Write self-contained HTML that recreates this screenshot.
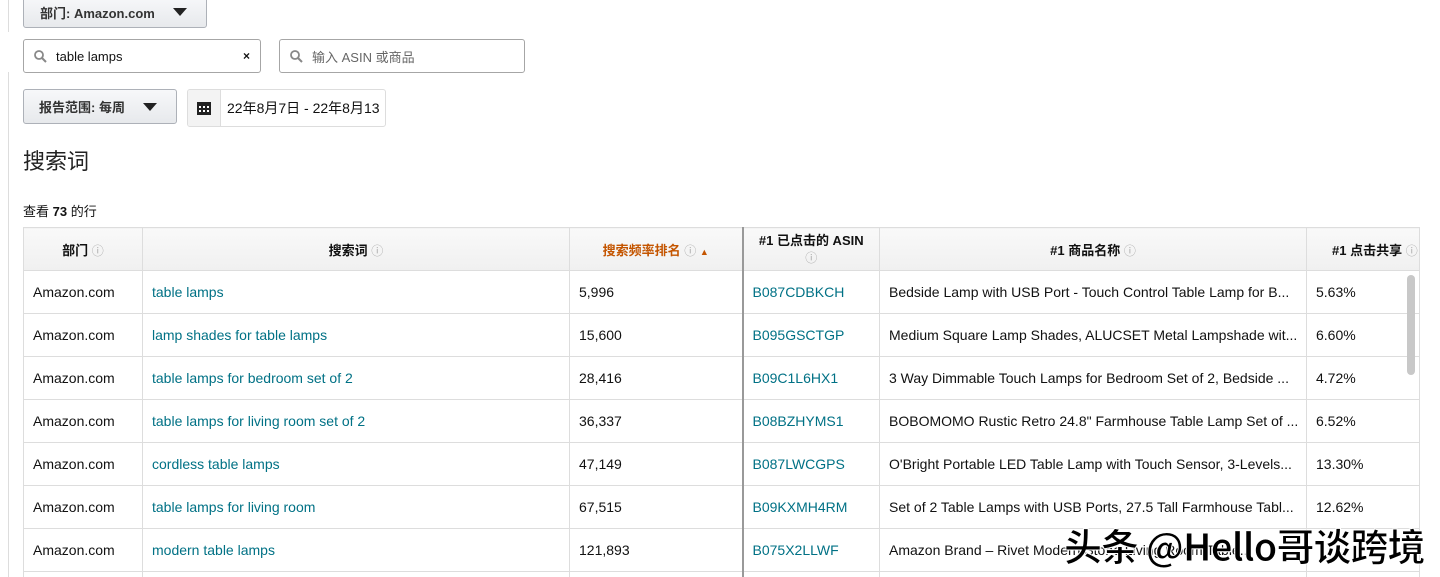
<!DOCTYPE html>
<html style="width:1440px;height:577px;overflow:hidden"><head><meta charset="utf-8"><style>
*{box-sizing:border-box;margin:0;padding:0}
body{width:1440px;height:577px;overflow:hidden;background:#fff;font-family:"Liberation Sans","Noto Sans CJK SC",sans-serif;color:#111;font-size:14px;position:relative}
.a{position:absolute}
.btn{background:linear-gradient(#f7f8fa,#e7e9ec);border:1px solid #adb1b8;border-radius:3px;font-size:13px;font-weight:bold;color:#333;display:flex;align-items:center}
.inp{border:1px solid #a6a6a6;border-radius:3px;background:#fff;display:flex;align-items:center;font-size:13px}
.tri{width:0;height:0;border-left:7px solid transparent;border-right:7px solid transparent;border-top:8px solid #222;margin-left:18px}
table{border-collapse:collapse;position:absolute;left:23px;top:227px;table-layout:fixed;width:1410px}
td,th{border:1px solid #ddd;font-size:14px;height:43px;padding:0 9px;white-space:nowrap;overflow:hidden}
th{background:linear-gradient(#f9f9f9,#f0f0f0);font-size:13px;font-weight:bold;text-align:center;color:#111}
td.l{color:#007185}
.i{color:#aaa;font-weight:normal;font-size:12px}
</style></head><body>
<div class="a" style="left:8px;top:0;width:1px;height:32px;background:#ddd"></div>
<div class="a" style="left:8px;top:72px;width:1px;height:505px;background:#ddd"></div>
<div class="a btn" style="left:23px;top:-4px;width:184px;height:32px;padding-left:16px">部门: Amazon.com<span class="tri"></span></div>
<div class="a inp" style="left:23px;top:39px;width:238px;height:34px;padding-left:10px"><svg width="13" height="13" viewBox="0 0 13 13"><circle cx="5" cy="5" r="4" fill="none" stroke="#888" stroke-width="1.8"/><path d="M8 8l4 4" stroke="#888" stroke-width="2"/></svg><span style="margin-left:9px;flex:1">table lamps</span><span style="font-weight:bold;margin-right:10px;font-size:12px">×</span></div>
<div class="a inp" style="left:279px;top:39px;width:246px;height:34px;padding-left:10px;color:#666"><svg width="13" height="13" viewBox="0 0 13 13"><circle cx="5" cy="5" r="4" fill="none" stroke="#888" stroke-width="1.8"/><path d="M8 8l4 4" stroke="#888" stroke-width="2"/></svg><span style="margin-left:9px">输入 ASIN 或商品</span></div>
<div class="a btn" style="left:23px;top:89px;width:154px;height:35px;padding-left:15px">报告范围: 每周<span class="tri"></span></div>
<div class="a inp" style="left:187px;top:89px;width:199px;height:38px;border-color:#ddd;overflow:hidden"><div style="width:33px;height:100%;background:#f3f3f3;border-right:1px solid #ddd;display:flex;align-items:center;justify-content:center;flex:none"><svg width="14" height="14"><rect x="0" y="1" width="14" height="13" fill="#222"/><g fill="#fff"><rect x="2" y="5" width="2" height="2"/><rect x="6" y="5" width="2" height="2"/><rect x="10" y="5" width="2" height="2"/><rect x="2" y="9" width="2" height="2"/><rect x="6" y="9" width="2" height="2"/><rect x="10" y="9" width="2" height="2"/></g></svg></div><span style="margin-left:6px;font-size:14px;white-space:nowrap">22年8月7日 - 22年8月13</span></div>
<div class="a" style="left:23px;top:144px;font-size:22px;color:#222">搜索词</div>
<div class="a" style="left:23px;top:201px;font-size:13px">查看 <b>73</b> 的行</div>
<table>
<colgroup><col style="width:119px"><col style="width:427px"><col style="width:173px"><col style="width:137px"><col style="width:427px"><col style="width:127px"></colgroup>
<tr><th>部门 <span class="i">ⓘ</span></th><th>搜索词 <span class="i">ⓘ</span></th><th style="color:#c45500;border-right:2px solid #999">搜索频率排名 <span class="i">ⓘ</span> <span style="font-size:9px">▲</span></th><th style="line-height:17px">#1 已点击的 ASIN<br><span class="i">ⓘ</span></th><th>#1 商品名称 <span class="i">ⓘ</span></th><th style="text-align:left;padding-left:25px">#1 点击共享 <span class="i">ⓘ</span></th></tr>
<tr><td>Amazon.com</td><td class="l">table lamps</td><td style="border-right:2px solid #999">5,996</td><td class="l">B087CDBKCH</td><td>Bedside Lamp with USB Port - Touch Control Table Lamp for B...</td><td>5.63%</td></tr>
<tr><td>Amazon.com</td><td class="l">lamp shades for table lamps</td><td style="border-right:2px solid #999">15,600</td><td class="l">B095GSCTGP</td><td>Medium Square Lamp Shades, ALUCSET Metal Lampshade wit...</td><td>6.60%</td></tr>
<tr><td>Amazon.com</td><td class="l">table lamps for bedroom set of 2</td><td style="border-right:2px solid #999">28,416</td><td class="l">B09C1L6HX1</td><td>3 Way Dimmable Touch Lamps for Bedroom Set of 2, Bedside ...</td><td>4.72%</td></tr>
<tr><td>Amazon.com</td><td class="l">table lamps for living room set of 2</td><td style="border-right:2px solid #999">36,337</td><td class="l">B08BZHYMS1</td><td>BOBOMOMO Rustic Retro 24.8" Farmhouse Table Lamp Set of ...</td><td>6.52%</td></tr>
<tr><td>Amazon.com</td><td class="l">cordless table lamps</td><td style="border-right:2px solid #999">47,149</td><td class="l">B087LWCGPS</td><td>O'Bright Portable LED Table Lamp with Touch Sensor, 3-Levels...</td><td>13.30%</td></tr>
<tr><td>Amazon.com</td><td class="l">table lamps for living room</td><td style="border-right:2px solid #999">67,515</td><td class="l">B09KXMH4RM</td><td>Set of 2 Table Lamps with USB Ports, 27.5 Tall Farmhouse Tabl...</td><td>12.62%</td></tr>
<tr><td>Amazon.com</td><td class="l">modern table lamps</td><td style="border-right:2px solid #999">121,893</td><td class="l">B075X2LLWF</td><td>Amazon Brand – Rivet Modern Stone Living Room Table...</td><td></td></tr>
<tr><td></td><td></td><td style="border-right:2px solid #999"></td><td></td><td></td><td></td></tr>
</table>
<div class="a" style="left:1420px;top:227px;width:20px;height:350px;background:#fff"></div>
<div class="a" style="left:1419px;top:227px;width:1px;height:350px;background:#ddd"></div>
<div class="a" style="left:1407px;top:275px;width:8px;height:100px;background:#c8c8c8;border-radius:4px"></div>
<div class="a" style="left:1064px;top:517px;font-size:38px;font-weight:bold;color:#000;-webkit-text-stroke:1px #fff;letter-spacing:-1px;font-family:'Noto Sans CJK SC',sans-serif;white-space:nowrap">头条 @Hello哥谈跨境</div>
</body></html>
